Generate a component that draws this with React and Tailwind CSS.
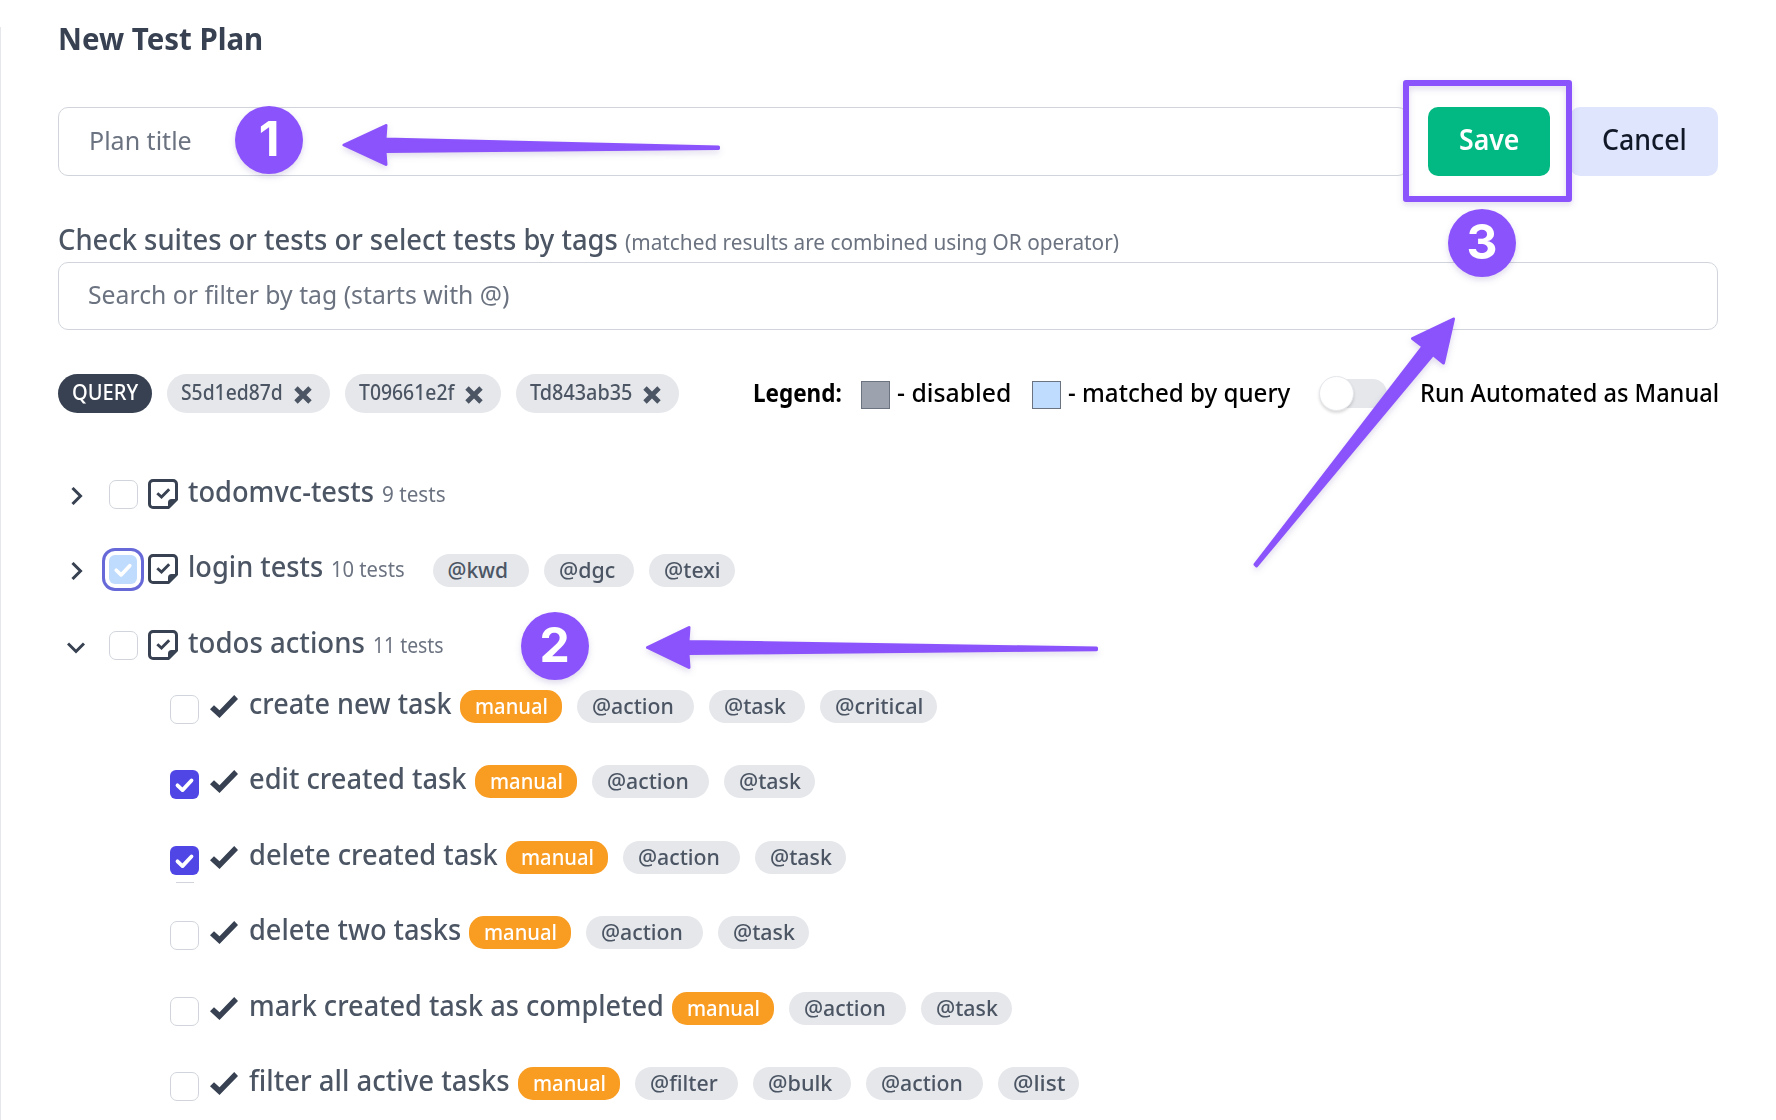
import { useLayoutEffect, useRef } from "react";

// One line of text, condensed horizontally to the width of its box.
function T({ children, className = "" }) {
  const box = useRef(null);
  const line = useRef(null);
  useLayoutEffect(() => {
    const fit = () => {
      line.current.style.transform = "none";
      const s = box.current.clientWidth / line.current.offsetWidth;
      line.current.style.transform = `scaleX(${s})`;
    };
    fit();
    document.fonts.ready.then(fit);
  }, []);
  return (
    <span ref={box} className={`block h-8 shrink-0 leading-8 whitespace-nowrap ${className}`}>
      <span ref={line} className="inline-block origin-left align-top">{children}</span>
    </span>
  );
}

const CHECK = "M7.5 15.3l5 4.8 9-9.6";

function Checkbox({ state, className = "" }) {
  if (state === "checked")
    return (
      <span className={`h-[29px] w-[29px] shrink-0 rounded-[6px] bg-[#4f46e5] ${className}`}>
        <svg viewBox="0 0 29 29" className="h-[29px] w-[29px]" fill="none" stroke="#fff" strokeWidth="3.8" strokeLinecap="round" strokeLinejoin="round"><path d={CHECK} /></svg>
      </span>
    );
  if (state === "matched")
    return (
      <span className={`h-[29px] w-[28px] shrink-0 rounded-[6px] bg-[#bfdbfe] shadow-[0_0_0_4px_#fff,0_0_0_7px_#6769d9] ${className}`}>
        <svg viewBox="0 0 29 29" className="h-[29px] w-[28px]" fill="none" stroke="#fff" strokeWidth="3.8" strokeLinecap="round" strokeLinejoin="round"><path d={CHECK} /></svg>
      </span>
    );
  return <span className={`h-[29px] w-[29px] shrink-0 rounded-[7px] border border-[#d1d5db] bg-white ${className}`} />;
}

function SuiteIcon() {
  return (
    <svg viewBox="0 0 30 30" className="mt-1 ml-[11px] h-[30px] w-[30px] shrink-0" fill="none" stroke="#374151" strokeWidth="3" strokeLinejoin="round">
      <path d="M20.5 28.5H5A3.5 3.5 0 0 1 1.5 25V5A3.5 3.5 0 0 1 5 1.5h20A3.5 3.5 0 0 1 28.5 5v15.5z" />
      <path d="M20 29.5v-6a3.5 3.5 0 0 1 3.5-3.5h6z" fill="#374151" stroke="none" />
      <path d="M9.3 14.2l4.2 3.9 7.7-7.8" strokeWidth="2.9" strokeLinejoin="miter" />
    </svg>
  );
}

function TestIcon() {
  return (
    <svg viewBox="0 0 28 23" className="mt-2 ml-[11px] h-[23px] w-[28px] shrink-0" fill="#374151">
      <path d="M0 14.3L4 10.3 9.5 15.3 24.2 0 28 4 9.5 23z" />
    </svg>
  );
}

function Chevron({ open }) {
  return open ? (
    <svg viewBox="0 0 18 12" className="mt-4 ml-[9px] h-3 w-[18px] shrink-0" fill="none" stroke="#374151" strokeWidth="3"><path d="M1 1.5l8 8 8-8" /></svg>
  ) : (
    <svg viewBox="0 0 12 18" className="mt-[12px] ml-[13px] h-[18px] w-3 shrink-0" fill="none" stroke="#374151" strokeWidth="3"><path d="M1.5 1l8 8-8 8" /></svg>
  );
}

const tag = {
  kwd: ["@kwd", "w-[96px]", "w-[61px]"],
  dgc: ["@dgc", "w-[90px]", "w-[56px]"],
  texi: ["@texi", "w-[86px]", "w-[57px]"],
  action: ["@action", "w-[117px]", "w-[82px]"],
  task: ["@task", "w-[96px]", "w-[62px]"],
  taskEnd: ["@task", "w-[91px]", "w-[62px]"],
  critical: ["@critical", "w-[117px]", "w-[88px]"],
  filter: ["@filter", "w-[102.5px]", "w-[68px]"],
  bulk: ["@bulk", "w-[98.5px]", "w-[64px]"],
  list: ["@list", "w-[81px]", "w-[52px]"],
};

function Tag({ id }) {
  const [label, pill, text] = tag[id];
  return (
    <span className={`mr-[15px] flex h-[33px] shrink-0 rounded-full bg-[#e5e7eb] pl-[15px] text-[21px] text-[#4b5563] ${pill}`}>
      <T className={text}>{label}</T>
    </span>
  );
}

const suites = [
  { name: "todomvc-tests", w: "w-[186px]", count: "9 tests", cw: "ml-2 w-[64px]", tags: [], h: "h-[75.4px]" },
  { name: "login tests", w: "w-[135px]", count: "10 tests", cw: "ml-2 w-[74px]", tags: ["kwd", "dgc", "texi"], state: "matched", h: "h-[75.4px]" },
  { name: "todos actions", w: "w-[177px]", count: "11 tests", cw: "ml-2 w-[71px]", tags: [], open: true, h: "h-[61px]" },
];

const tests = [
  ["create new task", "w-[203px]", false, ["action", "task", "critical"]],
  ["edit created task", "w-[218px]", true, ["action", "taskEnd"]],
  ["delete created task", "w-[249px]", true, ["action", "taskEnd"]],
  ["delete two tasks", "w-[212px]", false, ["action", "taskEnd"]],
  ["mark created task as completed", "w-[415px]", false, ["action", "taskEnd"]],
  ["filter all active tasks", "w-[261px]", false, ["filter", "bulk", "action", "list"]],
];

const queries = [
  ["S5d1ed87d", "w-[163px]", "w-[102px]"],
  ["T09661e2f", "w-[156px]", "w-[95px]"],
  ["Td843ab35", "w-[163px]", "w-[102px]"],
];

const SHADOW = "drop-shadow-[0_3px_3px_rgba(80,50,150,0.18)]";

function Badge({ n, className }) {
  return (
    <div className={`absolute flex h-[68px] w-[68px] items-center justify-center rounded-full bg-[#8b53fb] font-['Inter',sans-serif] text-[48px] leading-none font-bold text-white ${SHADOW} ${className}`}>
      <span className="-mt-[3px]">{n}</span>
    </div>
  );
}

function Annotations() {
  return (
    <>
      <div className={`absolute top-[80px] left-[1403px] h-[122px] w-[169px] rounded-[3px] border-[6px] border-[#8b53fb] ${SHADOW}`} />
      <Badge n="1" className="top-[106px] left-[235px]" />
      <Badge n="2" className="top-[612px] left-[520.5px]" />
      <Badge n="3" className="top-[209px] left-[1448px]" />
      <svg viewBox="0 0 1776 1120" className={`pointer-events-none absolute top-0 left-0 h-[1120px] w-[1776px] ${SHADOW}`} fill="#8b53fb" stroke="#8b53fb" strokeWidth="3" strokeLinejoin="round">
        <path d="M344 145L386 125.500 385 139 718.500 147V148.500L385 151.500 386 164.500z" />
        <path d="M647.500 647.500L689 627.500 688 641.500 1096.500 648V649.700L688 653.500 689 667.500z" />
        <path d="M1453.500 319L1412.500 338.500 1423 346.500 1255 564.500 1256.500 566 1433 354.500 1443.500 363z" />
      </svg>
    </>
  );
}

export default function App() {
  return (
    <div className="relative h-[1120px] w-[1776px] overflow-hidden bg-white font-['Noto_Sans',sans-serif] font-medium text-[#4b5563]">
      <div className="flex h-full">
        <div className="mt-[27px] w-px shrink-0 bg-[#e5e7eb]" />
        <main className="flex w-[1717px] shrink-0 flex-col pl-[57px] [&>*]:shrink-0">
          <h1 className="mt-[22px] text-[31px] font-bold text-[#374151]"><T className="w-[205px]">New Test Plan</T></h1>

          <div className="mt-[53px] flex h-[69px]">
            <div className="flex w-[1350px] rounded-[10px] border border-[#d1d5db] pt-[16px] pl-[30px] text-[26px] font-[450] text-[#6b7280]"><T className="w-[103px]">Plan title</T></div>
            <button className="ml-5 flex w-[122px] rounded-[10px] bg-[#03b983] pt-[16px] pl-[31px] text-[28px] font-semibold text-white"><T className="w-[60px]">Save</T></button>
            <button className="ml-[20px] flex w-[148px] rounded-[10px] bg-[#dfe5fd] pt-[16px] pl-[32px] text-[28px] text-[#111827]"><T className="w-[85px]">Cancel</T></button>
          </div>

          <div className="mt-[47px] flex h-[39px]">
            <T className="w-[560px] text-[28.5px]">Check suites or tests or select tests by tags</T>
            <T className="mt-[3px] ml-[7px] w-[494px] text-[21px] font-[450] text-[#6b7280]">(matched results are combined using OR operator)</T>
          </div>
          <div className="flex h-[68px] rounded-[10px] border border-[#d1d5db] pt-[15px] pl-[29px] text-[26px] font-[450] text-[#6b7280]"><T className="w-[422px]">Search or filter by tag (starts with @)</T></div>

          <div className="mt-[44px] flex h-[39px]">
            <span className="flex w-[94px] rounded-full bg-[#374151] pt-[2px] pl-[14px] text-[21px] text-white"><T className="w-[66px]">QUERY</T></span>
            {queries.map(([t, pill, w]) => (
              <span key={t} className={`ml-[15px] flex rounded-full bg-[#e5e7eb] pt-[2px] pl-[14px] text-[21px] ${pill}`}>
                <T className={w}>{t}</T>
                <svg viewBox="0 0 18 18" className="mt-[10px] ml-[11px] h-[18px] w-[18px] shrink-0" stroke="#4b5563" strokeWidth="4.8"><path d="M2 2l14 14M16 2L2 16" /></svg>
              </span>
            ))}
            <div className="-mr-px ml-auto flex pt-[2px] text-[25px] text-black">
              <T className="w-[89px] font-bold">Legend:</T>
              <span className="mt-[5px] ml-[19px] h-[28px] w-[29px] border border-[#6b7280] bg-[#9ca3af]" />
              <T className="ml-[7px] w-[114px]">- disabled</T>
              <span className="mt-[5px] ml-[21px] h-[28px] w-[29px] border border-[#6b7280] bg-[#bfdbfe]" />
              <T className="ml-[7px] w-[222px]">- matched by query</T>
              <span className="mt-[3px] ml-[30px] flex h-[29px] w-[67px] items-center rounded-full bg-[#e5e7eb]">
                <span className="-ml-px h-[35px] w-[35px] shrink-0 rounded-full border border-[#e5e7eb] bg-white shadow-[0_2px_3px_rgba(0,0,0,0.15)]" />
              </span>
              <T className="ml-[33px] w-[299px]">Run Automated as Manual</T>
            </div>
          </div>

          <div className="mt-[62px] flex flex-col">
            {suites.map((s) => (
              <div key={s.name} className={`flex items-start ${s.h}`}>
                <span className="flex w-[51px]"><Chevron open={s.open} /></span>
                <Checkbox state={s.state} className="-mr-px mt-[5px]" />
                {s.state && <span className="w-px" />}
                <SuiteIcon />
                <T className={`ml-[9.5px] text-[29px] ${s.w}`}>{s.name}</T>
                <T className={`mt-[3px] text-[21px] font-[450] text-[#6b7280] ${s.cw}`}>{s.count}</T>
                <div className="mt-1 ml-[28px] flex">{s.tags.map((t) => <Tag key={t} id={t} />)}</div>
              </div>
            ))}
            {tests.map(([name, w, checked, tags], i) => (
              <div key={name} className="flex h-[75.5px] shrink-0 items-start pl-[112px]">
                <div className="flex flex-col items-center">
                  <Checkbox state={checked ? "checked" : "empty"} className="mt-2" />
                  {i === 2 && <span className="mt-[7px] h-px w-[18px] bg-[#d1d5db]" />}
                </div>
                <TestIcon />
                <T className={`ml-[11px] text-[29px] ${w}`}>{name}</T>
                <span className="mt-[3px] mr-[15px] ml-2 flex h-[33px] w-[102px] shrink-0 rounded-[15px] bg-[#f89c22] pl-[14.5px] text-[21px] text-white"><T className="w-[73px]">manual</T></span>
                <div className="mt-[3px] flex">{tags.map((t) => <Tag key={t} id={t} />)}</div>
              </div>
            ))}
          </div>
        </main>
      </div>
      <Annotations />
    </div>
  );
}
